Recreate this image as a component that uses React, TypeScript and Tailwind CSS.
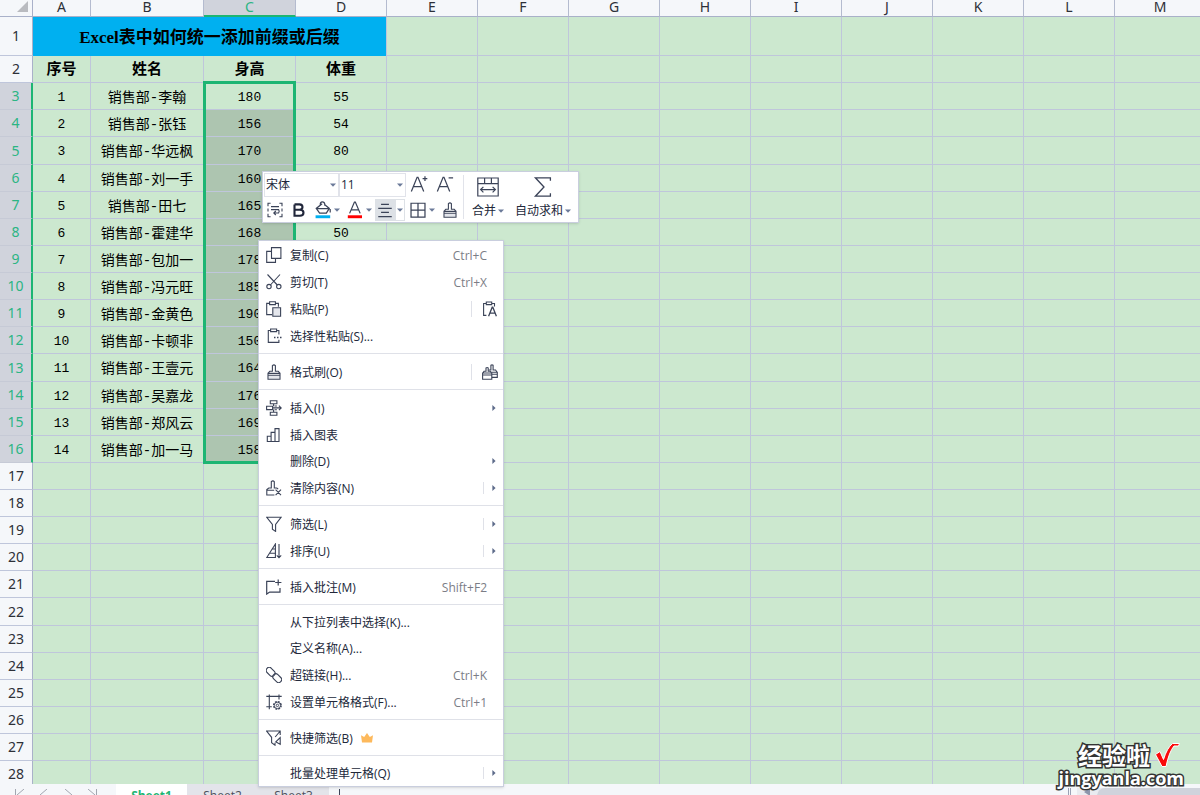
import { Fragment, type ReactNode } from "react";
import clsx from "clsx";

type Row = { no: number; name: string; height: number; weight?: number };

const people: Row[] = [
  { no: 1, name: "销售部-李翰", height: 180, weight: 55 },
  { no: 2, name: "销售部-张钰", height: 156, weight: 54 },
  { no: 3, name: "销售部-华远枫", height: 170, weight: 80 },
  { no: 4, name: "销售部-刘一手", height: 160 },
  { no: 5, name: "销售部-田七", height: 165 },
  { no: 6, name: "销售部-霍建华", height: 168, weight: 50 },
  { no: 7, name: "销售部-包加一", height: 178 },
  { no: 8, name: "销售部-冯元旺", height: 185 },
  { no: 9, name: "销售部-金黄色", height: 190 },
  { no: 10, name: "销售部-卡顿非", height: 150 },
  { no: 11, name: "销售部-王壹元", height: 164 },
  { no: 12, name: "销售部-吴嘉龙", height: 176 },
  { no: 13, name: "销售部-郑风云", height: 169 },
  { no: 14, name: "销售部-加一马", height: 158 },
];

const columns = ["A", "B", "C", "D", "E", "F", "G", "H", "I", "J", "K", "L", "M"];
const restColumns = columns.slice(4);
const emptyRows = [17, 18, 19, 20, 21, 22, 23, 24, 25, 26, 27, 28];
const tallRows = [5, 13, 22];

const colWidth = (name: string) => {
  if (name === "A") return "w-[58px]";
  if (name === "B") return "w-[113px]";
  if (name === "C") return "w-[92px]";
  return "w-[91px]";
};

const cell = "border-r border-b border-[#bfc6db] p-0 text-center";

/* ---------- icons ---------- */

function Icon({ children, size = "size-4" }: { children: ReactNode; size?: string }) {
  return (
    <svg
      viewBox="0 0 16 16"
      className={clsx("shrink-0 text-[#3b4358]", size)}
      fill="none"
      stroke="currentColor"
      strokeWidth="1.1"
      aria-hidden="true"
    >
      {children}
    </svg>
  );
}

const icons = {
  copy: (
    <Icon>
      <path d="M5.5.6h9.4v10.8H5.5zM5.3 4.4H.7v11h8.8v-3.8" />
    </Icon>
  ),
  cut: (
    <Icon>
      <path d="M1.5.5 11.3 11M14 .5 4.4 11" />
      <circle cx="3" cy="12.6" r="2.2" />
      <circle cx="12.8" cy="12.6" r="2.2" />
    </Icon>
  ),
  paste: (
    <Icon>
      <path d="M6 13.6H.7V2.4h2.8M9.6 2.4h2.8v3.4M3.6.8h5.8v2.8H3.6z" />
      <path d="M6.8 6.8h7.8v8.5H6.8z" fill="#e4e6ec" />
    </Icon>
  ),
  pasteSpecial: (
    <Icon>
      <path d="M4.5 2.5H2.3v11.9h10.6v-2.6M10.7 2.5h2.2v4M4.6 1h6v2.6h-6z" />
      <path d="M8 9.4h1.5M11 9.4h1.5M14 9.4h1.5" strokeWidth="1.5" />
    </Icon>
  ),
  pasteText: (
    <Icon>
      <path d="M4.4 14.4H1.6V2.5h2.6M9.8 2.5h2.7v3M4.3 1h5.4v2.6H4.3z" />
      <path d="m6.6 15.2 3.6-9h.6l3.6 9M8 12.2h5" strokeWidth="1.3" />
    </Icon>
  ),
  brush: (
    <Icon>
      <path d="M2.5 11.5h11v3.3h-11z" fill="#e4e6ec" stroke="none" />
      <path d="M2 9.4h12v5.9H2zM2 11.3h12M2.2 9.2l1.6-2h2.6V1.6Q8 .2 9.4 1.6v5.6h2.8l1.6 2" />
    </Icon>
  ),
  brushMulti: (
    <Icon>
      <path d="M.6 9h9.2v6.2H.6zM.6 11h9.2M1 9l1-1.7h2V4q1.2-1 2.2 0v3.3h2.2l1.2 1.7" />
      <path d="M9.9 13.4h5.4V8.2H9.4M9.9 10.2h5.4M6.6 6h2.3V1.3q1.1-.9 2.2 0V6h2.5l1.3 2" />
    </Icon>
  ),
  insert: (
    <Icon>
      <path d="M4.3.7h6.6v3H4.3zM.6 6.2h6v3.4h-6zM4.3 12.2h6.6v3H4.3zM10.9 6H8.6M10.9 9.8H8.6M6.6 7.9h8.6M12.9 5.7l2.3 2.2-2.3 2.2M7.6 3.7v2.5M7.6 9.6v2.6" />
    </Icon>
  ),
  chart: (
    <Icon>
      <path d="M1.3 9.2h3.8v5.3H1.3zM5.1 5.4H9v9.1H5.1zM9 1.6h4v12.9H9z" />
    </Icon>
  ),
  clear: (
    <Icon>
      <path d="M8.4 15H.8V9.6l2-1.6h2.5V1.6q1.6-1.5 3 0V8h2.5l1.4 1.2M.8 10.2h7.4M9.6 9.6l5.4 5.6M15 9.6l-5.4 5.6" />
    </Icon>
  ),
  filter: (
    <Icon>
      <path d="M.6 1.2h14.6L9.6 8.4v7l-3.2-2.2V8.4z" />
    </Icon>
  ),
  sort: (
    <Icon>
      <path d="M9.4 1v13.5H.8zM9.4 10.2H3.7M9.4 6H6.4M13 1v13.8M10.8 12.4l2.2 2.4 2.2-2.4" />
    </Icon>
  ),
  comment: (
    <Icon>
      <path d="M9 2.3H.7v12.8l3-2H14V9M12.2.4v6.2M9.2 3.5h6.2" strokeWidth="1.2" />
    </Icon>
  ),
  link: (
    <Icon>
      <rect x="-.4" y="1.8" width="10" height="6" rx="3" transform="rotate(45 4.6 4.8)" />
      <rect x="6.2" y="8.2" width="10" height="6" rx="3" transform="rotate(45 11.2 11.2)" />
    </Icon>
  ),
  format: (
    <Icon>
      <path d="M3.3.6v14.6M13 .6v5M.3 2.4h15.4M.3 12.8h5.5" />
      <circle cx="11.4" cy="11.4" r="3.7" strokeDasharray="1.9 1" strokeWidth="1.5" />
      <circle cx="11.4" cy="11.4" r="3.1" strokeWidth=".8" />
      <circle cx="11.4" cy="11.4" r="1.2" strokeWidth=".9" />
    </Icon>
  ),
  quickFilter: (
    <Icon>
      <path d="M14.2 5V1H.6l5 6.3v5.5L9 15.2v-2.4M14.2 1 9.2 7M14.2 7.6v6.8M14.2 14.4l-4.4-2.6 4.4-4.2z" />
    </Icon>
  ),
};

function Crown() {
  return (
    <svg viewBox="0 0 12 10" className="ml-2 h-[10px] w-3" fill="#fdb95c" aria-hidden="true">
      <path d="M0 2.2 3.2 4 6 0l2.8 4L12 2.2 11 9.5H1z" />
    </svg>
  );
}

function Caret() {
  return (
    <svg viewBox="0 0 6 4" className="h-1 w-[6px] shrink-0" fill="#6b7a99" aria-hidden="true">
      <path d="M0 .4h6L3 3.8z" />
    </svg>
  );
}

/* ---------- context menu ---------- */

type MenuItem = {
  label: string;
  icon?: ReactNode;
  keys?: string;
  side?: ReactNode;
  submenu?: "plain" | "split";
  premium?: boolean;
};

const menuGroups: MenuItem[][] = [
  [
    { label: "复制(C)", icon: icons.copy, keys: "Ctrl+C" },
    { label: "剪切(T)", icon: icons.cut, keys: "Ctrl+X" },
    { label: "粘贴(P)", icon: icons.paste, side: icons.pasteText },
    { label: "选择性粘贴(S)...", icon: icons.pasteSpecial },
  ],
  [{ label: "格式刷(O)", icon: icons.brush, side: icons.brushMulti }],
  [
    { label: "插入(I)", icon: icons.insert, submenu: "plain" },
    { label: "插入图表", icon: icons.chart },
    { label: "删除(D)", submenu: "plain" },
    { label: "清除内容(N)", icon: icons.clear, submenu: "split" },
  ],
  [
    { label: "筛选(L)", icon: icons.filter, submenu: "split" },
    { label: "排序(U)", icon: icons.sort, submenu: "split" },
  ],
  [{ label: "插入批注(M)", icon: icons.comment, keys: "Shift+F2" }],
  [
    { label: "从下拉列表中选择(K)..." },
    { label: "定义名称(A)..." },
    { label: "超链接(H)...", icon: icons.link, keys: "Ctrl+K" },
    { label: "设置单元格格式(F)...", icon: icons.format, keys: "Ctrl+1" },
  ],
  [{ label: "快捷筛选(B)", icon: icons.quickFilter, premium: true }],
  [{ label: "批量处理单元格(Q)", submenu: "split" }],
];

function MenuRow({ item }: { item: MenuItem }) {
  return (
    <div className={clsx("flex items-center", item.icon ? "h-[27px]" : "h-[26px]")}>
      <button
        type="button"
        role="menuitem"
        className="flex h-full flex-1 items-center pr-4 pl-[7px] text-left text-[12px] text-[#22283a]"
      >
        {item.icon ?? <span className="w-4" />}
        <span className="ml-2 pt-[2px] whitespace-nowrap">{item.label}</span>
        {item.premium && <Crown />}
        {item.keys && <span className="ml-auto pt-[2px] text-[#7b7d86]">{item.keys}</span>}
      </button>
      {item.side && (
        <button
          type="button"
          aria-label={item.label}
          className="flex h-4 w-8 items-center justify-end border-l border-[#dfe1e8] pr-[5px]"
        >
          {item.side}
        </button>
      )}
      {item.submenu && (
        <button
          type="button"
          aria-label={item.label}
          className={clsx(
            "flex h-3 w-5 items-center justify-center border-l",
            item.submenu === "split" ? "border-[#dfe1e8]" : "border-transparent",
          )}
        >
          <svg viewBox="0 0 4 6" className="h-[6px] w-1" fill="#5d6b8a" aria-hidden="true">
            <path d="M.4 0v6L3.6 3z" />
          </svg>
        </button>
      )}
    </div>
  );
}

function ContextMenu() {
  return (
    <div
      role="menu"
      className="absolute top-[240px] left-[258px] w-[246px] border border-[#c9cede] bg-white shadow-sm"
    >
      {menuGroups.map((group, index) => (
        <Fragment key={group[0].label}>
          {index > 0 && (
            <div className="flex h-[9px] items-center">
              <div className="h-px w-full bg-[#dfe1e8]" />
            </div>
          )}
          {group.map((item) => (
            <MenuRow key={item.label} item={item} />
          ))}
        </Fragment>
      ))}
    </div>
  );
}

/* ---------- floating toolbar ---------- */

function PickerField({ label, value, width }: { label: string; value: string; width: string }) {
  return (
    <label className={clsx("relative block h-6 border border-[#e1e3ea]", width)}>
      <select
        aria-label={label}
        className="block h-[22px] w-full appearance-none bg-transparent pl-px text-[12px] leading-[22px] text-[#22283a]"
      >
        <option>{value}</option>
      </select>
      <span className="pointer-events-none absolute inset-y-0 right-[2px] flex items-center">
        <Caret />
      </span>
    </label>
  );
}

const tool = "flex h-[22px] items-center justify-center gap-[2px]";
const glyph = "size-[18px]";

function MiniToolbar() {
  return (
    <div className="absolute top-[171px] left-[262px] flex border border-[#c9cede] bg-white shadow-sm">
      <div className="flex flex-col pb-px">
        <div className="flex pt-px pl-px">
          <PickerField label="字体" value="宋体" width="w-[75px]" />
          <PickerField label="字号" value="11" width="w-[67px]" />
          <button type="button" aria-label="增大字号" className={clsx(tool, "w-[26px]")}>
            <Icon size={glyph}>
              <path d="M1.2 14.6 6.3 2h.8l5.100 12.600M3 10.400h7.400M11.200 3.200h4.200M13.300 1.100v4.200" />
            </Icon>
          </button>
          <button type="button" aria-label="减小字号" className={clsx(tool, "w-[26px]")}>
            <Icon size={glyph}>
              <path d="M1.2 14.6 6.3 2h.8l5.1 12.6M3 10.4h7.4M11.200 2.600h4" />
            </Icon>
          </button>
        </div>
        <div className="flex pt-[2px]">
          <button type="button" aria-label="自动换行" className={clsx(tool, "w-6")}>
            <Icon>
              <path d="M3.6 1.2H1v3M12.400 1.200H15v3M3.600 14.800H1v-3M12.400 14.800H15v-3M1 6.500v3M15 6.500v3M4 4.600h8M4 7.600h7.600q1.200 1.600 0 3.400H7M8.800 9 6.800 11l2 2" />
            </Icon>
          </button>
          <button type="button" aria-label="加粗" className={clsx(tool, "w-6")}>
            <Icon>
              <path
                d="M3.5 2.4h5q3 .2 3 2.6 0 2.6-3 2.8h-5M3.5 7.8h5.4q3.6.1 3.6 3 0 2.9-3.6 3H3.5V2.4"
                strokeWidth="2.1"
                stroke="#20263a"
              />
            </Icon>
          </button>
          <button type="button" aria-label="填充颜色" className={clsx(tool, "w-8")}>
            <Icon size={glyph}>
              <path d="M5.600 3.400Q5.400.8 7.400.8t2.200 2.200v1.200M7.200 2.400 2 6.600l3 4.200h6l2.600-4.200-4-3.200M2.200 6.800h11.400M14.400 7.200v3" />
              <path d="M1.400 14h13" stroke="#00b0f0" strokeWidth="2.6" />
            </Icon>
            <Caret />
          </button>
          <button type="button" aria-label="字体颜色" className={clsx(tool, "w-8")}>
            <Icon size={glyph}>
              <path d="M3.2 11 7.5 1h.8l4.3 10M4.8 7.800H11" />
              <path d="M1.600 14h12.600" stroke="#ff0000" strokeWidth="2.6" />
            </Icon>
            <Caret />
          </button>
          <button
            type="button"
            aria-label="居中"
            className={clsx(tool, "w-[30px] border border-[#dde1e6] bg-[#dde1e6]")}
          >
            <Icon size={glyph}>
              <path d="M4.500 3h7M2 6.600h12M4.500 10.200h7M2 13.800h12" />
            </Icon>
            <span className="flex h-full w-2 items-center justify-center bg-white">
              <Caret />
            </span>
          </button>
          <button type="button" aria-label="边框" className={clsx(tool, "w-[34px]")}>
            <Icon size={glyph}>
              <path d="M1.800 2h12.400v12.400H1.800zM8 2v12.400M1.800 8.200h12.400" />
            </Icon>
            <Caret />
          </button>
          <button type="button" aria-label="格式刷" className={clsx(tool, "w-[22px]")}>
            {icons.brush}
          </button>
        </div>
      </div>
      <div className="my-[3px] ml-[2px] border-l border-[#e1e3ea]" />
      <div className="flex pr-1 text-[12px] leading-4 text-[#22283a]">
        <button type="button" className="flex w-12 flex-col items-center pt-1">
          <svg
            viewBox="0 0 22 22"
            className="size-[22px]"
            fill="none"
            stroke="#3b4358"
            strokeWidth="1.2"
            aria-hidden="true"
          >
            <path d="M.8 2h20.4v18H.8zM.8 7.6h20.4M7.6 2v5.6M14.400 2v5.600M3.600 13.600h14.800M6.400 10.800l-2.800 2.800 2.800 2.800M15.600 10.800l2.800 2.800-2.800 2.800" />
          </svg>
          <span className="mt-[5px] flex items-center gap-[2px] whitespace-nowrap">
            合并
            <Caret />
          </span>
        </button>
        <button type="button" className="flex w-[62px] flex-col items-center pt-1">
          <svg
            viewBox="0 0 22 22"
            className="size-[22px]"
            fill="none"
            stroke="#3b4358"
            strokeWidth="1.3"
            aria-hidden="true"
          >
            <path d="M18.4 4.8v-3h-15L12 11l-8.600 9.200h15v-3" />
          </svg>
          <span className="mt-[5px] flex items-center gap-[2px] whitespace-nowrap">
            自动求和
            <Caret />
          </span>
        </button>
      </div>
    </div>
  );
}

/* ---------- sheet ---------- */

function RowHeader({ n, selected }: { n: number; selected?: boolean }) {
  return (
    <th
      scope="row"
      className={clsx(
        "border-b p-0 text-center font-['Noto_Sans',sans-serif] text-[14px] leading-5 font-normal",
        selected
          ? "border-r-2 border-r-[#1db573] border-b-[#c6cad6] bg-[#d0d3dc] text-[#2bb583]"
          : "border-r border-r-[#a9b1c9] border-b-[#bfc6db] bg-[#f5f7fa] text-[#2d3038]",
      )}
    >
      {n}
    </th>
  );
}

function EmptyCells({ names }: { names: string[] }) {
  return (
    <>
      {names.map((name) => (
        <td key={name} className={cell} />
      ))}
    </>
  );
}

function Sheet() {
  const heading = clsx(cell, "pt-1 text-[15px] leading-5 font-bold");
  const number = clsx(cell, "pt-[3px] text-[13px] leading-5");

  return (
    <table className="w-max table-fixed border-separate border-spacing-0 bg-[#cce8cf] text-black">
      <colgroup>
        <col className="w-[33px]" />
        {columns.map((name) => (
          <col key={name} className={colWidth(name)} />
        ))}
      </colgroup>
      <thead className="font-['Noto_Sans',sans-serif]">
        <tr className="h-[17px]">
          <td className="border-r border-b border-[#a9b1c9] bg-[#f5f7fa] p-0 align-top">
            <svg viewBox="0 0 11 11" className="mt-px ml-[17px] size-[11px]" aria-hidden="true">
              <path d="M11 0v11H0z" fill="#b9bbc0" />
            </svg>
          </td>
          {columns.map((name) => (
            <th
              key={name}
              scope="col"
              className={clsx(
                "border-r border-r-[#b4bbcf] p-0 align-top text-[14px] leading-[13px] font-normal",
                name === "C"
                  ? "border-b-2 border-b-[#1db573] bg-[#d0d3dc] text-[#2bb583]"
                  : "border-b border-b-[#a9b1c9] bg-[#f5f7fa] text-[#2d3038]",
              )}
            >
              {name}
            </th>
          ))}
        </tr>
      </thead>
      <tbody className="font-['Liberation_Mono','Noto_Sans_CJK_SC',monospace]">
        <tr className="h-[39px]">
          <RowHeader n={1} />
          <td
            colSpan={4}
            className="border-r border-[#bfc6db] bg-[#00b0f0] bg-clip-padding p-0 pt-[2px] text-center font-['Liberation_Serif','Noto_Sans_CJK_SC',serif] text-[17px] leading-6 font-bold"
          >
            Excel表中如何统一添加前缀或后缀
          </td>
          <EmptyCells names={restColumns} />
        </tr>
        <tr className="h-[27px]">
          <RowHeader n={2} />
          <td className={heading}>序号</td>
          <td className={heading}>姓名</td>
          <td className={heading}>身高</td>
          <td className={heading}>体重</td>
          <EmptyCells names={restColumns} />
        </tr>
        {people.map((person, index) => (
          <tr key={person.no} className={tallRows.includes(index + 3) ? "h-[28px]" : "h-[27px]"}>
            <RowHeader n={index + 3} selected />
            <td className={number}>{person.no}</td>
            <td className={clsx(cell, "pt-[3px] text-[14px] leading-5 whitespace-nowrap")}>
              {person.name}
            </td>
            <td className={clsx(number, index > 0 && "border-[#a3b3b5] bg-[#adc5b0]")}>
              {person.height}
            </td>
            <td className={number}>{person.weight}</td>
            <EmptyCells names={restColumns} />
          </tr>
        ))}
        {emptyRows.map((n) => (
          <tr key={n} className={tallRows.includes(n) ? "h-[28px]" : "h-[27px]"}>
            <RowHeader n={n} />
            <EmptyCells names={columns} />
          </tr>
        ))}
      </tbody>
    </table>
  );
}

function TabBar() {
  const tab = "w-[71px] pt-1 text-center";
  return (
    <div className="flex h-[11px] shrink-0 overflow-hidden bg-[#f5f7fa] text-[12px] leading-4">
      <div className="flex w-[116px] items-start gap-3 pt-[5px] pl-[14px]">
        {["M1.5 0v12M10 0 3 6l7 6", "M9 0 2 6l7 6", "M3 0l7 6-7 6", "M2 0l7 6-7 6M10.5 0v12"].map(
          (d) => (
            <svg
              key={d}
              viewBox="0 0 12 12"
              className="size-3 shrink-0"
              fill="none"
              stroke="#a2a6b0"
              aria-hidden="true"
            >
              <path d={d} />
            </svg>
          ),
        )}
      </div>
      <button type="button" className={clsx(tab, "bg-white font-bold text-[#1db573]")}>
        Sheet1
      </button>
      <button type="button" className={clsx(tab, "bg-[#e3e4ea] text-[#4c505c]")}>
        Sheet2
      </button>
      <button type="button" className={clsx(tab, "bg-[#e3e4ea] text-[#4c505c]")}>
        Sheet3
      </button>
      <button type="button" aria-label="新建工作表" className="ml-1 w-3 pt-[5px]">
        <svg viewBox="0 0 12 12" className="size-3" stroke="#3b4358" aria-hidden="true">
          <path d="M6.5 0v12M0 6.5h12" />
        </svg>
      </button>
      <div className="ml-auto flex w-[132px] pt-1">
        <div className="h-3 w-[3px] border-x border-[#9aa1b5]" />
        <div className="ml-[6px] flex flex-1 bg-[#e9ebf0]">
          <svg viewBox="0 0 6 8" className="mx-[7px] h-2 w-[6px]" fill="#8d95ab" aria-hidden="true">
            <path d="M6 0v8L0 4z" />
          </svg>
          <div className="h-3 flex-1 rounded-tl-lg bg-[#d0d3dc]" />
        </div>
      </div>
    </div>
  );
}

function Watermark() {
  return (
    <div className="absolute right-4 bottom-[7px] flex flex-col items-end font-['Noto_Sans_CJK_SC',sans-serif] font-bold text-white">
      <div className="flex items-center gap-1 pr-1">
        <span className="text-[24px] leading-6 [paint-order:stroke] [-webkit-text-stroke:3px_#333]">
          经验啦
        </span>
        <svg viewBox="0 0 26 26" className="size-[26px]" aria-hidden="true">
          <path
            d="M1.5 12.5 6 9.5l3.500 8Q13 6 18.500 1.500H25.500l-1 2.500h-4.500Q15 10 12 24.500H8z"
            fill="#fa0a0a"
            stroke="#fff"
          />
        </svg>
      </div>
      <span className="font-['Open_Sans',sans-serif] text-[18px] leading-5 [paint-order:stroke] [-webkit-text-stroke:3px_#333]">
        jingyanla.com
      </span>
    </div>
  );
}

export default function App() {
  return (
    <main className="relative flex h-screen flex-col overflow-hidden bg-[#cce8cf] font-['Open_Sans','Noto_Sans_CJK_SC',sans-serif]">
      <div className="relative min-h-0 flex-1 overflow-hidden">
        <Sheet />
        {/* selected range C3:C16 */}
        <div className="pointer-events-none absolute top-[81px] left-[203px] h-[383px] w-[93px] border-[3px] border-[#1db573]" />
      </div>
      <TabBar />
      <MiniToolbar />
      <ContextMenu />
      <Watermark />
    </main>
  );
}
